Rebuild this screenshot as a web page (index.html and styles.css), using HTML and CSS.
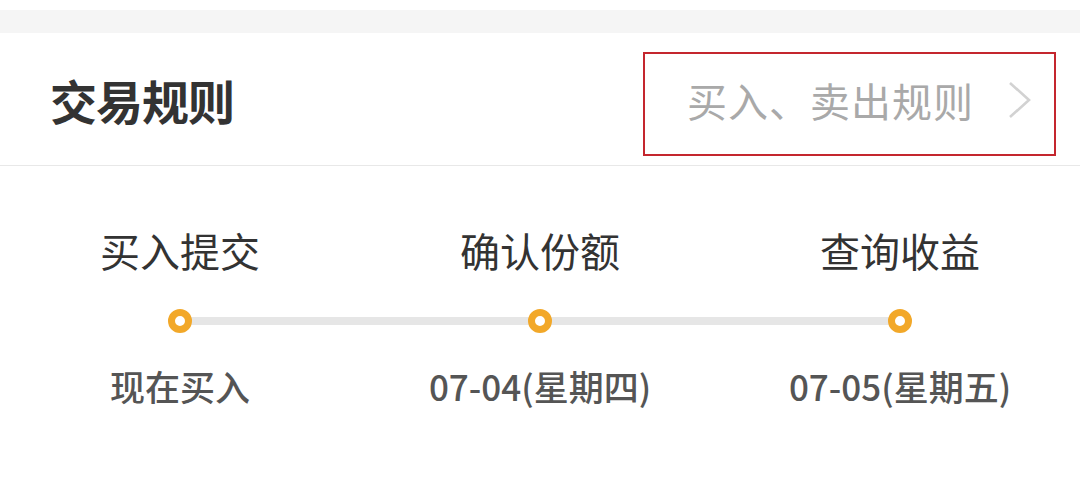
FILE: index.html
```html
<!DOCTYPE html>
<html lang="zh">
<head>
<meta charset="utf-8">
<link rel="stylesheet" href="styles.css">
</head>
<body>
<div class="band"></div>
<header class="head">
  <h1 class="title">交易规则</h1>
  <a class="rules-link">
    <span class="rules-text">买入、卖出规则</span>
    <svg class="chev" width="26" height="38" viewBox="0 0 26 38"><polyline points="3,2 22,19 3,36" fill="none" stroke="#d2d2d2" stroke-width="2.6"/></svg>
  </a>
</header>
<section class="steps">
  <div class="labels">
    <div class="label">买入提交</div>
    <div class="label">确认份额</div>
    <div class="label">查询收益</div>
  </div>
  <div class="track">
    <span class="dot"></span><span class="dot"></span><span class="dot"></span>
  </div>
  <div class="dates">
    <div class="date">现在买入</div>
    <div class="date">07-04(星期四)</div>
    <div class="date">07-05(星期五)</div>
  </div>
</section>
</body>
</html>
```
FILE: styles.css
```css
html, body {
  margin: 0;
  padding: 0;
  background: #fff;
  font-family: "Noto Sans CJK SC", "Noto Sans", sans-serif;
}
.band {
  margin-top: 10px;
  height: 23px;
  background: #f5f5f5;
}
.head {
  height: 132px;
  border-bottom: 1px solid #e8e8e8;
  display: flex;
  align-items: center;
  justify-content: space-between;
  padding: 0 24px 0 50px;
}
.title {
  margin: 0;
  font-size: 47px;
  font-weight: 700;
  color: #333;
  letter-spacing: -1px;
}
.rules-link {
  width: 409px;
  height: 92px;
  padding-bottom: 8px;
  margin-top: 9px;
  border: 2px solid #c4262e;
  display: flex;
  align-items: center;
}
.rules-text {
  margin-left: 42px;
  font-size: 40px;
  color: #a9a9a9;
  letter-spacing: 1px;
}
.chev {
  margin-left: 33px;
}
.steps {
  padding-top: 56px;
}
.labels, .dates {
  display: grid;
  grid-template-columns: repeat(3, 1fr);
  text-align: center;
}
.label {
  font-size: 40px;
  line-height: 56px;
  color: #333;
}
.track {
  margin: 31px 168px 0;
  height: 24px;
  display: flex;
  justify-content: space-between;
  background: linear-gradient(#e6e6e6, #e6e6e6) center / calc(100% - 24px) 8px no-repeat;
}
.dot {
  width: 10px;
  height: 10px;
  border: 7px solid #f2a829;
  border-radius: 50%;
  background: #fff;
}
.dates {
  margin-top: 31px;
}
.date {
  font-size: 35px;
  line-height: 44px;
  font-weight: 500;
  color: #555;
}
```
